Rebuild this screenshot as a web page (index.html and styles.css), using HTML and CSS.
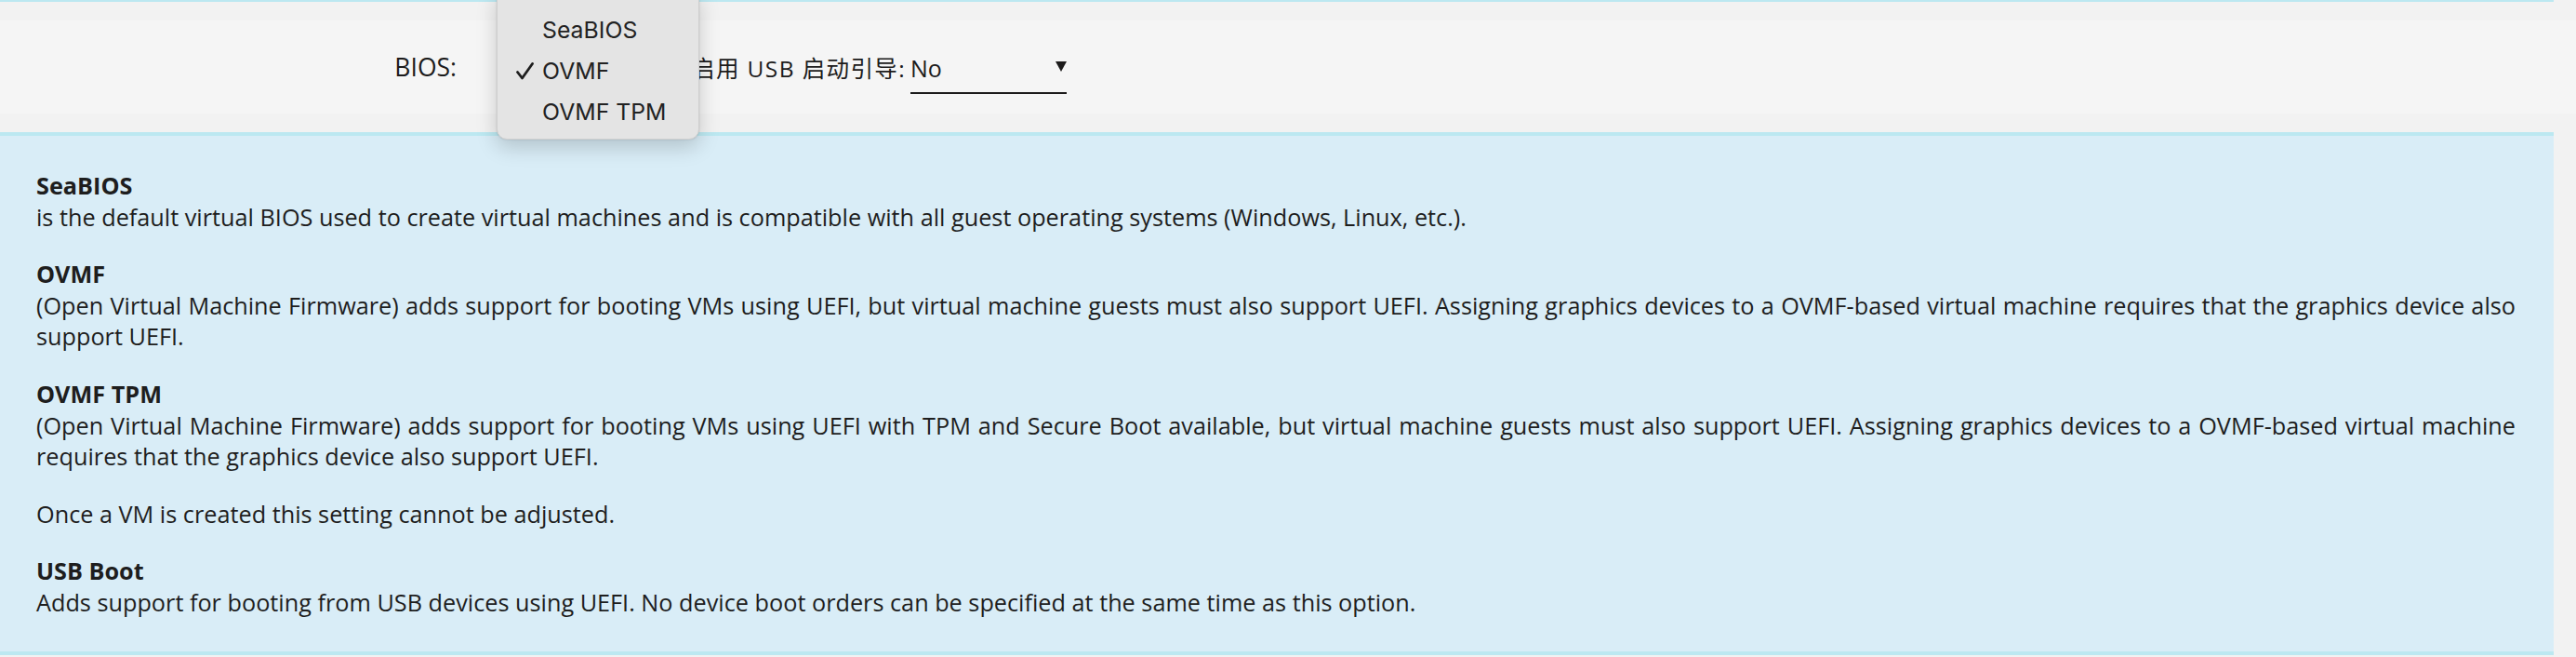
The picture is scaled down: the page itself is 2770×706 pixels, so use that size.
FILE: index.html
```html
<!DOCTYPE html>
<html lang="zh">
<head>
<meta charset="utf-8">
<title>VM BIOS</title>
<link rel="stylesheet" href="styles.css">
</head>
<body>
<div class="prev-help"></div>
<div class="form-row">
  <div class="label label-bios">BIOS:</div>
  <div class="select select-bios"><span class="select-value"></span><span class="arrow"></span></div>
  <div class="label label-usb">启用 USB 启动引导:</div>
  <div class="select select-usb"><span class="select-value">No</span><span class="arrow"></span></div>
</div>
<div class="popup-menu">
  <div class="menu-item"><span class="check"></span><span>SeaBIOS</span></div>
  <div class="menu-item selected"><span class="check"><svg width="19" height="19" viewBox="0 0 19 19"><path d="M1.5 10.5 L6.5 17 L17.5 1.5" fill="none" stroke="#1e1e1e" stroke-width="2.8" stroke-linecap="round" stroke-linejoin="round"/></svg></span><span>OVMF</span></div>
  <div class="menu-item"><span class="check"></span><span>OVMF TPM</span></div>
</div>
<blockquote class="inline-help">
  <p><b>SeaBIOS</b><br>is the default virtual BIOS used to create virtual machines and is compatible with all guest operating systems (Windows, Linux, etc.).</p>
  <p><b>OVMF</b><br>(Open Virtual Machine Firmware) adds support for booting VMs using UEFI, but virtual machine guests must also support UEFI. Assigning graphics devices to a OVMF-based virtual machine requires that the graphics device also support UEFI.</p>
  <p><b>OVMF TPM</b><br>(Open Virtual Machine Firmware) adds support for booting VMs using UEFI with TPM and Secure Boot available, but virtual machine guests must also support UEFI. Assigning graphics devices to a OVMF-based virtual machine requires that the graphics device also support UEFI.</p>
  <p>Once a VM is created this setting cannot be adjusted.</p>
  <p><b>USB Boot</b><br>Adds support for booting from USB devices using UEFI. No device boot orders can be specified at the same time as this option.</p>
</blockquote>
</body>
</html>
```
FILE: styles.css
```css
html, body {
  margin: 0;
  padding: 0;
}
body {
  background: #f2f2f2;
  color: #1c1b1b;
  font-family: "Open Sans", "Noto Sans CJK SC", sans-serif;
  width: 2770px;
  height: 706px;
  overflow: hidden;
  position: relative;
}
.prev-help {
  height: 2px;
  width: 2746px;
  background: #bce8f1;
}
.form-row {
  margin-top: 20px;
  height: 100px;
  background: #f5f5f5;
  display: flex;
  align-items: center;
  font-size: 25.6px;
}
.label {
  flex-shrink: 0;
  white-space: nowrap;
}
.label-bios {
  width: 491px;
  text-align: right;
  font-size: 26.5px;
}
.label-usb {
  width: 235px;
  margin-left: 4px;
  font-family: "Open Sans", "Noto Sans CJK SC", sans-serif;
  font-size: 24.5px;
  letter-spacing: 1.4px;
}
.select {
  flex-shrink: 0;
  width: 168px;
  height: 54px;
  box-sizing: border-box;
  border-bottom: 2px solid #1c1b1b;
  display: flex;
  align-items: center;
  justify-content: space-between;
  margin-top: 4px;
  font-size: 25px;
}
.select-bios {
  margin-left: 81px;
}
.arrow {
  width: 0;
  height: 0;
  border-left: 6.5px solid transparent;
  border-right: 6.5px solid transparent;
  border-top: 11px solid #1c1b1b;
  margin-bottom: 4px;
  margin-left: auto;
}
.popup-menu {
  position: absolute;
  left: 534px;
  top: -12px;
  width: 218px;
  height: 162px;
  box-sizing: border-box;
  padding-top: 21px;
  background: #e4e4e4;
  border: 1px solid #cfcfcf;
  border-radius: 11px;
  box-shadow: 0 8px 22px rgba(0, 0, 0, 0.18), 0 0 2px rgba(0, 0, 0, 0.15);
  font-family: "Inter", "Liberation Sans", sans-serif;
  font-size: 24.8px;
  color: #222222;
}
.menu-item {
  height: 44px;
  display: flex;
  align-items: center;
  padding-left: 20px;
}
.check {
  width: 28px;
  display: flex;
  align-items: center;
}
.inline-help {
  margin: 20px 24px 0 0;
  padding: 37px 41px 35px 39px;
  background: #d9edf7;
  border-top: 4px solid #bce8f1;
  border-bottom: 4px solid #bce8f1;
  font-family: "Open Sans", sans-serif;
  font-size: 25.25px;
  line-height: 33.6px;
  text-align: justify;
  color: #1e1e1e;
}
.inline-help p {
  margin: 0 0 28px 0;
}
.inline-help p:last-child {
  margin-bottom: 0;
}
```
